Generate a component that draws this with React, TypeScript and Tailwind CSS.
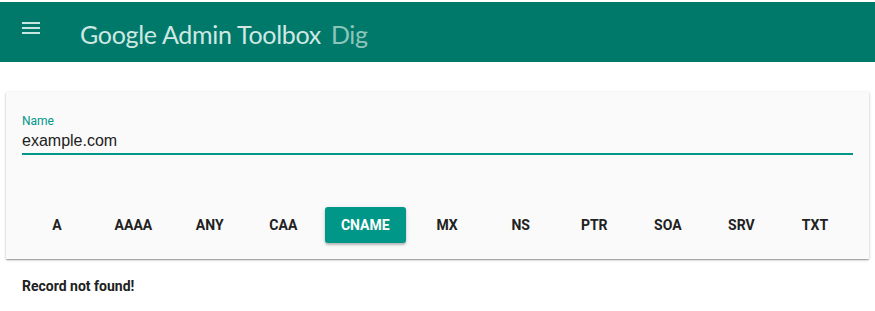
import React, { useState } from 'react';

const TYPES = ['A', 'AAAA', 'ANY', 'CAA', 'CNAME', 'MX', 'NS', 'PTR', 'SOA', 'SRV', 'TXT'];

const MenuIcon: React.FC = () => (
  <svg width="24" height="24" viewBox="0 0 24 24" className="fill-[#c8e6df]">
    <path d="M3 18h18v-2H3v2zm0-5h18v-2H3v2zm0-7v2h18V6H3z" />
  </svg>
);

const App: React.FC = () => {
  const [name, setName] = useState<string>('example.com');
  const [selected, setSelected] = useState<string>('CNAME');

  return (
    <div className="min-h-[311px] bg-white font-['Roboto',sans-serif]">
      <header className="mt-[2px] h-[60px] bg-[#00796b] flex items-center">
        <button type="button" className="ml-[19px] mb-[8px] w-6 h-6 flex items-center justify-center">
          <MenuIcon />
        </button>
        <h1 className="ml-[37px] mt-[5px] text-[25px] font-['Lato',sans-serif] tracking-[-0.3px] text-[#cfe8e2]">
          Google Admin Toolbox
          <span className="ml-[10px] text-[#8cc5b9]">Dig</span>
        </h1>
      </header>

      <div className="mx-[6px] mt-[30px] bg-[#fafafa] shadow-[0_1px_3px_rgba(0,0,0,0.2),0_1px_1px_rgba(0,0,0,0.14),0_2px_1px_-1px_rgba(0,0,0,0.12)] px-4 pb-4">
        <div className="pt-[22px]">
          <label htmlFor="name" className="block text-[12px] leading-[14px] text-[#009688]">
            Name
          </label>
          <input
            id="name"
            value={name}
            onChange={(e) => setName(e.target.value)}
            className="block w-full bg-transparent pt-[3px] pb-[3px] text-[16px] leading-[19px] text-[#212121] font-['Liberation_Sans',sans-serif] outline-none border-b-2 border-[#009688]"
          />
        </div>

        <div className="mt-[52px] ml-[3px] mr-[6px] flex justify-between">
          {TYPES.map((t) => (
            <button
              key={t}
              type="button"
              onClick={() => setSelected(t)}
              className={`h-9 min-w-[64px] px-4 rounded-[3px] text-[14px] font-bold uppercase ${
                selected === t
                  ? 'bg-[#009688] text-white shadow-[0_2px_2px_rgba(0,0,0,0.2),0_1px_5px_rgba(0,0,0,0.12)]'
                  : 'text-[#212121]'
              }`}
            >
              {t}
            </button>
          ))}
        </div>
      </div>

      <p className="mt-[17px] ml-[22px] text-[14px] font-bold text-[#212121]">Record not found!</p>
    </div>
  );
};

export default App;
